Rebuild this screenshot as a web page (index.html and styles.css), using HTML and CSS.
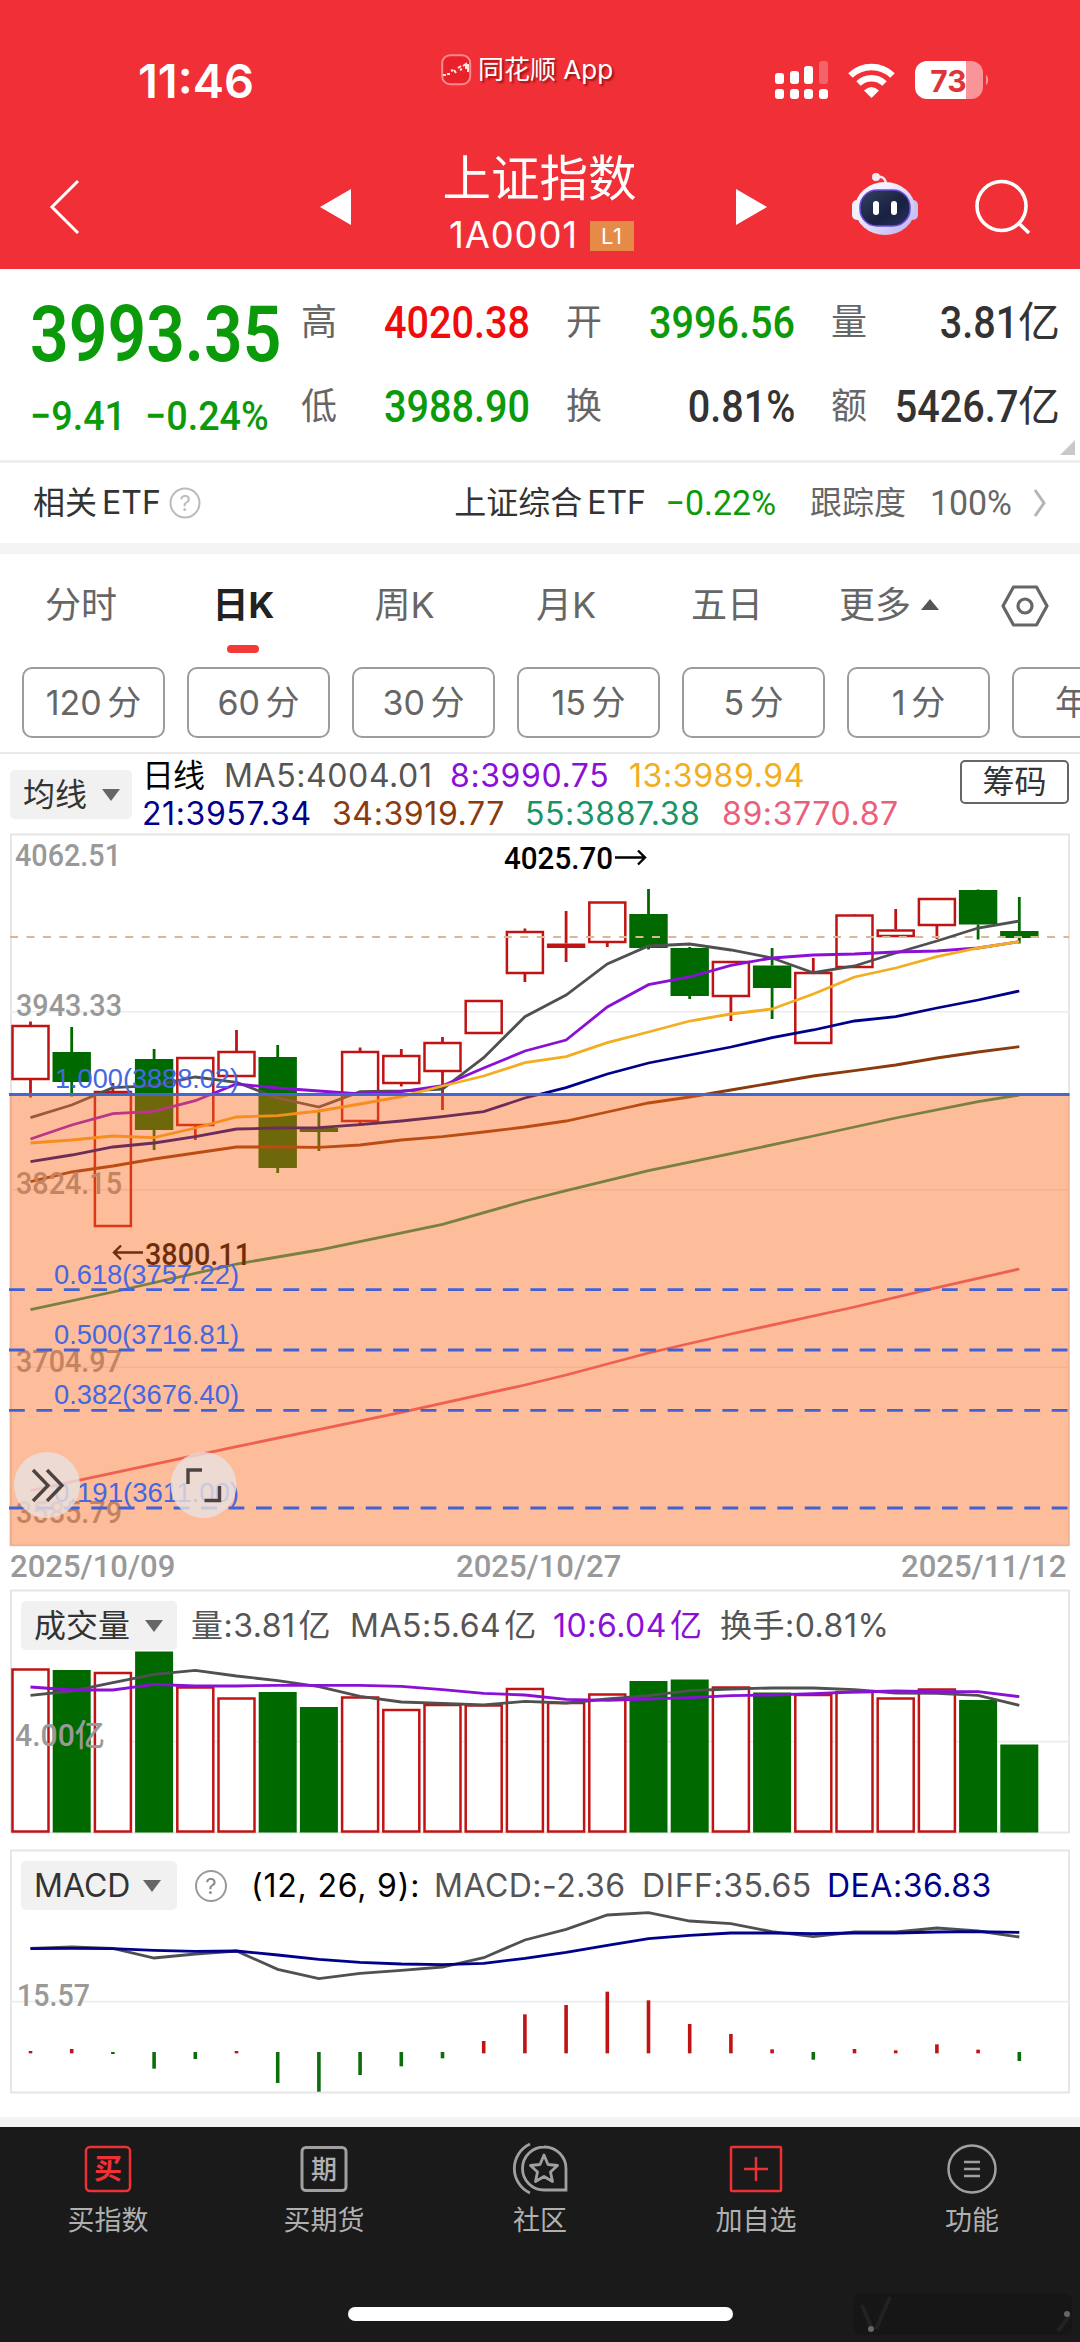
FILE: index.html
```html
<!DOCTYPE html>
<html lang="zh-CN">
<head>
  <meta charset="UTF-8" />
  <meta name="viewport" content="width=device-width, initial-scale=1" />
  <title>上证指数 1A0001</title>
  <link rel="stylesheet" href="styles.css">
</head>
<body>

  <header class="header">
    <div class="status-bar">
      <div class="clock">11:46</div>
      <div class="app-name">
        <svg width="31" height="32" viewBox="0 0 31 32">
          <rect x="1.2" y="1.2" width="28" height="29" rx="8" fill="#e8212a" stroke="#fa8a8a" stroke-width="2" />
          <path d="M2 21h3M6 20h3M10 17l2-1M13 16l2 3M17 14l3-2M19 16l2-1M22 12l3-2v5M27 10v8" stroke="#ffe9dc" stroke-width="2" fill="none" />
        </svg>
        <span>同花顺 App</span>
      </div>
      <div class="status-icons">
        <svg width="54" height="38" viewBox="0 0 54 38" fill="#fff">
          <rect x="0" y="12" width="9" height="11" rx="3" /><rect x="15" y="10" width="9" height="13" rx="3" />
          <rect x="29" y="5" width="9" height="18" rx="3" /><rect x="44" y="0" width="9" height="23" rx="3" opacity=".25" />
          <rect x="0" y="28" width="9" height="10" rx="3" /><rect x="15" y="28" width="9" height="10" rx="3" />
          <rect x="29" y="28" width="9" height="10" rx="3" /><rect x="44" y="28" width="9" height="10" rx="3" />
        </svg>
        <svg class="wifi" width="47" height="35" viewBox="0 0 47 35" fill="none" stroke="#fff" stroke-width="6.5">
          <path d="M2.5 12.5A30 30 0 0 1 44.5 12.5" />
          <path d="M10.5 20.5A19 19 0 0 1 36.5 20.5" />
          <path d="M23.500 35L16 27.5Q23.5 20.5 31 27.5Z" fill="#fff" stroke="none" />
        </svg>
        <svg class="battery" width="76" height="38" viewBox="0 0 76 38">
          <path d="M12 0H51V38H12A12 12 0 0 1 0 26V12A12 12 0 0 1 12 0Z" fill="#fff" />
          <path d="M51 0H56A12 12 0 0 1 68 12V26A12 12 0 0 1 56 38H51Z" fill="#f99599" />
          <path d="M71 13.5Q75.5 19 71 24.5Z" fill="#f99599" />
          <text x="33.5" y="31" class="battery-text" text-anchor="middle">73</text>
        </svg>
      </div>
    </div>

    <div class="title-bar">
      <svg class="back" width="32" height="56" viewBox="0 0 32 56"><path d="M29 2L3 28L29 54" fill="none" stroke="#fff" stroke-width="3" /></svg>
      <svg class="prev" width="32" height="36" viewBox="0 0 32 36"><path d="M0 18L31 0V36Z" fill="#fff" /></svg>
      <div class="title">
        <div class="name">上证指数</div>
        <div class="code">1A0001<span class="level">L1</span></div>
      </div>
      <svg class="next" width="32" height="36" viewBox="0 0 32 36"><path d="M31 18L0 0V36Z" fill="#fff" /></svg>
      <svg class="robot" width="66" height="62" viewBox="0 0 66 62">
        <defs>
          <linearGradient id="shell" x1="0" y1="0" x2="1" y2="1"><stop offset=".3" stop-color="#f4f2fb" /><stop offset="1" stop-color="#b9aef0" /></linearGradient>
          <linearGradient id="visor" x1="0" y1="0" x2="1" y2="1"><stop offset="0" stop-color="#34415f" /><stop offset=".6" stop-color="#18213f" /><stop offset="1" stop-color="#2c2f66" /></linearGradient>
        </defs>
        <path d="M24 4Q33 2 34 11" fill="none" stroke="#f6e4ee" stroke-width="2.5" />
        <circle cx="24" cy="4" r="4" fill="#f6eaf2" />
        <rect x="0" y="27" width="10" height="20" rx="5" fill="#f0eefa" /><rect x="56" y="27" width="10" height="20" rx="5" fill="#c9c0f4" />
        <ellipse cx="33" cy="35.5" rx="30" ry="26.5" fill="url(#shell)" />
        <rect x="8" y="17" width="50" height="36" rx="17" fill="url(#visor)" stroke="#6a4be0" stroke-width="1.5" />
        <rect x="21" y="28" width="6" height="14" rx="3" fill="#fff" /><rect x="39" y="28" width="6" height="14" rx="3" fill="#fff" />
      </svg>
      <svg class="search" width="56" height="56" viewBox="0 0 56 56" fill="none" stroke="#fff" stroke-width="3.6"><circle cx="26.5" cy="27" r="24.5" /><path d="M43.5 44L54 54" /></svg>
    </div>
  </header>

  <section class="quote">
    <div class="price">
      <div class="last"><span class="din">3993.35</span></div>
      <div class="change"><span class="din">−9.41</span><span class="din">−0.24%</span></div>
    </div>
    <div class="stats">
      <div class="stat"><label>高</label><span class="din up">4020.38</span></div>
      <div class="stat"><label>开</label><span class="din down">3996.56</span></div>
      <div class="stat"><label>量</label><span class="value"><span class="din">3.81</span>亿</span></div>
      <div class="stat"><label>低</label><span class="din down">3988.90</span></div>
      <div class="stat"><label>换</label><span class="din">0.81%</span></div>
      <div class="stat"><label>额</label><span class="value"><span class="din">5426.7</span>亿</span></div>
    </div>
    <i class="corner"></i>
  </section>

  <section class="etf">
    <span class="etf-label">相关 ETF</span>
    <svg class="help" width="32" height="32" viewBox="0 0 32 32"><circle cx="16" cy="16" r="14.5" fill="none" stroke="#bbb" stroke-width="2" /><text x="16" y="23.5" text-anchor="middle" fill="#bbb">?</text></svg>
    <span class="etf-name">上证综合 ETF</span>
    <span class="etf-rate din">−0.22%</span>
    <span class="track">跟踪度</span>
    <span class="track-rate din">100%</span>
    <svg width="14" height="28" viewBox="0 0 14 28"><path d="M2 1L11 14L2 27" fill="none" stroke="#b5b5b5" stroke-width="3" /></svg>
  </section>

  <div class="band"></div>

  <nav class="tabs">
    <span>分时</span>
    <span class="active">日K</span>
    <span>周K</span>
    <span>月K</span>
    <span>五日</span>
    <span class="more">更多<i></i></span>
    <svg width="48" height="42" viewBox="0 0 48 42" fill="none" stroke="#666" stroke-width="3.2"><path d="M12.5 2H35.5L46 21L35.5 40H12.5L2 21Z" stroke-linejoin="round" /><circle cx="24" cy="21" r="7" /></svg>
  </nav>

  <div class="chips">
    <span>120 分</span><span>60 分</span><span>30 分</span><span>15 分</span><span>5 分</span><span>1 分</span><span>年K</span>
  </div>

  <section class="ma-bar">
    <div class="picker">均线<i></i></div>
    <div class="ma-list">
      <div class="ma-row first">
        <span class="black">日线</span><span class="grey">MA5:4004.01</span><span class="purple">8:3990.75</span><span class="yellow">13:3989.94</span>
      </div>
      <div class="ma-row second">
        <span class="navy">21:3957.34</span><span class="brown">34:3919.77</span><span class="green">55:3887.38</span><span class="pink">89:3770.87</span>
      </div>
    </div>
    <div class="chip-btn">筹码</div>
  </section>

  <svg class="k-chart" id="kChart" width="1080" height="714" viewBox="0 833 1080 714"></svg>
  <div class="dates">
    <span class="din">2025/10/09</span><span class="din">2025/10/27</span><span class="din">2025/11/12</span>
  </div>

  <section class="panel">
    <div class="legend vol-legend">
      <div class="picker">成交量<i></i></div>
      <span class="grey">量:3.81<b>亿</b></span><span class="grey">MA5:5.64<b>亿</b></span><span class="purple">10:6.04<b>亿</b></span><span class="grey">换手:0.81%</span>
    </div>
    <svg class="sub-chart" id="volChart" width="1080" height="246" viewBox="0 1589 1080 246"></svg>
  </section>

  <section class="panel">
    <div class="legend macd-legend">
      <div class="picker">MACD<i></i></div>
      <svg class="help" width="34" height="34" viewBox="0 0 34 34"><circle cx="17" cy="17" r="15" fill="none" stroke="#999" stroke-width="2" /><text x="17" y="25" text-anchor="middle" fill="#888">?</text></svg>
      <span class="black">(12, 26, 9):</span><span class="grey">MACD:-2.36</span><span class="grey">DIFF:35.65</span><span class="navy">DEA:36.83</span>
    </div>
    <svg class="sub-chart" id="macdChart" width="1080" height="246" viewBox="0 1849 1080 246"></svg>
  </section>

  <div class="band bottom-band"></div>

  <footer class="footer">
    <div class="menu">
      <div class="menu-item">
        <svg width="56" height="56" viewBox="0 0 56 56"><rect x="6" y="6" width="44" height="44" rx="4" fill="none" stroke="#ef3137" stroke-width="2.5" /><text x="28" y="38" text-anchor="middle" class="icon-red">买</text></svg>
        <span>买指数</span>
      </div>
      <div class="menu-item">
        <svg width="56" height="56" viewBox="0 0 56 56"><rect x="6" y="6.5" width="44" height="43" rx="4" fill="none" stroke="#a0a0a0" stroke-width="3" /><text x="28" y="37.5" text-anchor="middle" class="icon-grey">期</text></svg>
        <span>买期货</span>
      </div>
      <div class="menu-item">
        <svg width="56" height="56" viewBox="0 0 56 56" fill="none" stroke="#a0a0a0" stroke-width="2.8">
          <path d="M32 6A21.5 21.5 0 0 0 32 49H54V28A21.5 21.5 0 0 0 32 6Z" />
          <path d="M18 3A27 27 0 0 0 18 52" />
          <path d="M32 14L36 23.5L45.5 24.5L38.5 31L40.5 40.5L32 35.5L23.5 40.5L25.5 31L18.5 24.5L28 23.5Z" stroke-linejoin="round" />
        </svg>
        <span>社区</span>
      </div>
      <div class="menu-item">
        <svg width="56" height="56" viewBox="0 0 56 56" fill="none" stroke="#ef3137" stroke-width="2.5"><rect x="3" y="6" width="50" height="44" rx="1" /><path d="M28 16V40M16 28H40" /></svg>
        <span>加自选</span>
      </div>
      <div class="menu-item">
        <svg width="56" height="56" viewBox="0 0 56 56" fill="none" stroke="#a0a0a0" stroke-width="2.5"><circle cx="28" cy="28" r="23.5" /><path d="M20 21H36M20 28H36M20 35H36" /></svg>
        <span>功能</span>
      </div>
    </div>
    <div class="home-bar"></div>
    <svg class="smudge" width="218" height="42" viewBox="0 0 218 42"><rect width="218" height="42" rx="8" fill="#161616" /><path d="M8 12L18 36M36 4L22 36M204 38L216 22" stroke="#222" stroke-width="4" /><circle cx="17" cy="36" r="3" fill="#666" /><circle cx="213" cy="21" r="3" fill="#666" /></svg>
  </footer>

  <script src="script.js"></script>
</body>
</html>
```

FILE: styles.css
```css
/* Reset & base */
* {
  box-sizing: border-box;
}
body {
  margin: 0;
  width: 1080px;
  height: 2342px;
  overflow: hidden;
  background: #fff;
  color: #333;
  font-family: Inter, "Noto Sans CJK SC", sans-serif;
  font-size: 32px;
  line-height: 1;
}
svg {
  display: block;
  flex: none;
}
span, label {
  white-space: nowrap;
}
/* narrow figures */
.din {
  display: inline-block;
  font-family: Roboto, "Noto Sans CJK SC", sans-serif;
  font-weight: 500;
  transform: scaleX(0.88);
  transform-origin: right center;
}
.up { color: #f00c0c; }
.down { color: #0a9a0a; }
.black { color: #000; }
.grey { color: #555; }
.purple { color: #8a10d8; }
.yellow { color: #f3ad20; }
.navy { color: #00008b; }
.brown { color: #8b3a0e; }
.green { color: #1b9368; }
.pink { color: #ea607b; }

/* Header */
.header {
  height: 269px;
  background: #f12f36;
  color: #fff;
}
.status-bar {
  display: flex;
  align-items: center;
  height: 140px;
  padding: 20px 89px 0 138px;
}
.clock {
  width: 303px;
  font-size: 47px;
  font-weight: 600;
}
.app-name {
  display: flex;
  align-items: center;
  gap: 6px;
  width: 334px;
  margin-top: -21px;
  font-size: 26px;
  text-shadow: 2px 2px 2px rgba(90, 0, 0, 0.6);
}
.status-icons {
  display: flex;
  align-items: center;
}
.wifi {
  margin: 0 20px 0 19px;
}
.battery-text {
  font-size: 30px;
  font-weight: 700;
  fill: #e0343a;
}
.title-bar {
  display: flex;
  align-items: center;
  height: 129px;
  padding: 4px 0 0 49px;
}
.prev { margin-left: 239px; }
.title {
  width: 384px;
  margin-top: -5px;
  padding-right: 9px;
  text-align: center;
}
.name {
  font-size: 48.5px;
  line-height: 58px;
}
.code {
  display: flex;
  justify-content: center;
  align-items: center;
  gap: 12px;
  height: 46px;
  margin-top: 5px;
  padding-left: 4px;
  font-size: 36.5px;
  letter-spacing: 0.8px;
}
.level {
  width: 44px;
  height: 30px;
  background: #e58b47;
  font-size: 22px;
  line-height: 30px;
}
.robot { margin: -6px 0 0 84px; }
.search { margin-left: 57px; }

/* Quote */
.quote {
  display: flex;
  position: relative;
  height: 194px;
  padding: 11px 20px 0 30px;
  border-bottom: 3px solid #eee;
}
.price {
  width: 271px;
  color: #0a9a0a;
}
.price .din { transform-origin: left center; }
.last {
  height: 106px;
  font-size: 77px;
  line-height: 106px;
}
.last .din {
  font-weight: 600;
}
.change {
  display: flex;
  font-size: 41px;
  line-height: 60px;
}
.change .din { transform: scaleX(0.92); }
.change span:first-child { width: 115px; }
.stats {
  display: grid;
  grid-template-columns: repeat(3, 229px);
  grid-auto-rows: 84px;
  column-gap: 36px;
}
.stat {
  display: flex;
  justify-content: space-between;
  align-items: center;
  font-size: 45px;
}
.stat label {
  font-size: 36px;
  color: #666;
}
.stat .value {
  display: flex;
  align-items: center;
}
.value { font-size: 42px; }
.value .din { font-size: 45px; }
.corner {
  position: absolute;
  right: 5px;
  bottom: 5px;
  border-bottom: 15px solid #c8c8c8;
  border-left: 15px solid transparent;
}

/* ETF */
.etf {
  display: flex;
  align-items: center;
  height: 80px;
  padding: 0 33px;
}
.etf .help { margin-left: 8px; }
.help text { font-size: 22px; }
.etf-label, .etf-name { word-spacing: -4px; }
.etf-name { margin-left: auto; }
.etf .din { font-weight: 400; font-size: 35px; transform: scaleX(0.97); }
.etf-rate { width: 130px; text-align: right; color: #0a9a0a; }
.track { margin-left: 34px; color: #666; }
.track-rate { width: 106px; margin-right: 21px; text-align: right; color: #666; }

.band {
  height: 11px;
  background: #f4f4f4;
}

/* Period tabs */
.tabs {
  display: grid;
  grid-template-columns: 162px 163px 159px 164px 158px 158px 1fr;
  align-items: center;
  height: 105px;
  padding-bottom: 4px;
  font-size: 36px;
  color: #666;
  text-align: center;
}
.tabs svg { margin: 3px 0 0 37px; }
.tabs .active {
  color: #222;
  font-weight: 700;
  position: relative;
}
.active::after {
  content: "";
  position: absolute;
  left: 65px;
  top: 58px;
  width: 32px;
  height: 8px;
  border-radius: 4px;
  background: #f33a36;
}
.more {
  display: flex;
  align-items: center;
  gap: 10px;
  padding-left: 33px;
}
.more i {
  border: 9px solid transparent;
  border-top: 0;
  border-bottom: 11px solid #555;
}
.chips {
  display: flex;
  gap: 22px;
  height: 95px;
  padding: 8px 0 0 22px;
  overflow: hidden;
  border-bottom: 2px solid #eaeaea;
}
.chips span {
  flex: none;
  width: 143px;
  height: 71px;
  border: 2px solid #9c9c9c;
  border-radius: 10px;
  font-size: 34px;
  line-height: 68px;
  word-spacing: -4px;
  text-align: center;
  color: #666;
}

/* Moving averages */
.picker {
  display: flex;
  align-items: center;
  gap: 15px;
  height: 49px;
  padding-left: 13px;
  border-radius: 5px;
  background: #f1f1f1;
  letter-spacing: 0;
}
.picker i {
  border: 9px solid transparent;
  border-bottom: 0;
  border-top: 12px solid #666;
}
.ma-bar {
  display: flex;
  height: 79px;
  padding-left: 10px;
}
.ma-bar .picker {
  width: 122px;
  margin-top: 16px;
}
.ma-list {
  width: 828px;
  padding: 3px 0 0 10px;
  letter-spacing: 0.6px;
}
.ma-row {
  display: grid;
  height: 38px;
  align-items: center;
}
.first { grid-template-columns: 82px 226px 179px 200px; }
.first .black { letter-spacing: -1px; }
.second { grid-template-columns: 190px 193px 197px 200px; }
.chip-btn {
  width: 109px;
  height: 44px;
  margin-top: 6px;
  border: 2px solid #666;
  border-radius: 5px;
  line-height: 40px;
  text-align: center;
}

/* Charts */
.k-chart {
  font-family: Roboto, sans-serif;
}
.axis {
  font-size: 31px;
  font-weight: 500;
  fill: #999;
}
.mark {
  font-size: 32px;
  font-weight: 500;
}
.fib {
  font-family: "Liberation Sans", sans-serif;
  font-size: 27px;
  fill: #4567e0;
}
.sub-chart {
  font-family: Roboto, "Noto Sans CJK SC", sans-serif;
}
.dates {
  display: flex;
  justify-content: space-between;
  height: 42px;
  padding: 0 19px 0 10px;
  line-height: 39px;
  color: #999;
}
.dates .din {
  width: 160px;
  transform: scaleX(0.97);
  transform-origin: left center;
}
.panel {
  position: relative;
  height: 246px;
  margin-bottom: 14px;
}
.legend {
  position: absolute;
  left: 21px;
  top: 12px;
  display: grid;
  align-items: center;
  letter-spacing: 0.5px;
}
.legend b {
  margin-left: 3px;
  font-weight: 400;
}
.legend .picker {
  width: 156px;
}
.vol-legend { grid-template-columns: 170px 159px 203px 167px 200px; }
.macd-legend { grid-template-columns: 173px 57px 183px 208px 185px 200px; }
.macd-legend .black { letter-spacing: 0.800px; }
.macd-legend .picker { gap: 13px; }

/* Footer */
.bottom-band {
  height: 10px;
  margin-top: 22px;
}
.footer {
  position: relative;
  height: 216px;
  padding-top: 14px;
  background: #1a1a1a;
}
.menu {
  display: flex;
}
.menu-item {
  display: flex;
  flex-direction: column;
  align-items: center;
  gap: 10px;
  width: 216px;
  font-size: 27px;
  color: #b0b0b0;
}
.icon-red {
  font-size: 28px;
  font-weight: 700;
  fill: #ef3137;
}
.icon-grey {
  font-size: 26px;
  font-weight: 500;
  fill: #b0b0b0;
}
.home-bar {
  width: 385px;
  height: 14px;
  margin: 73px auto 0;
  border-radius: 7px;
  background: #fff;
}
.smudge {
  position: absolute;
  right: 8px;
  bottom: 8px;
}
```

FILE: script.js
```javascript
const RED = '#c01414';
const GREEN = '#006a00';
const step = 41.2;
const cx = i => 30.5 + step * i;

function polyline(ys, color, width = 2.8) {
  const pts = ys.map((y, i) => Array.isArray(y) ? cx(y[0]) + ',' + y[1] : cx(i) + ',' + y);
  return `<polyline points="${pts.join(' ')}" fill="none" stroke="${color}" stroke-width="${width}"/>`;
}
function line(x1, y1, x2, y2, color, width, extra = '') {
  return `<line x1="${x1}" y1="${y1}" x2="${x2}" y2="${y2}" stroke="${color}" stroke-width="${width}" ${extra}/>`;
}
function label(cls, x, y, w, text) {
  return `<text class="${cls}" x="${x}" y="${y}" textLength="${w}" lengthAdjust="spacingAndGlyphs">${text}</text>`;
}

// K线: [涨跌, 最高, 实体上沿, 实体下沿, 最低]
const candles = [
  [1, 1021.5, 1025, 1080, 1097.5], [0, 1027, 1052, 1082, 1096.5], [1, 1083, 1091, 1227, 1227],
  [0, 1049, 1059, 1130, 1150], [1, 1057, 1057, 1126, 1140], [1, 1030, 1051, 1077, 1077],
  [0, 1045, 1057, 1168, 1173], [0, 1111, 1128, 1132, 1151], [1, 1047.5, 1051, 1122, 1124],
  [1, 1049, 1055, 1084, 1086.5], [1, 1037, 1042, 1072, 1110], [1, 1000, 1000, 1034, 1034],
  [1, 928.5, 931, 974, 982], [1, 911, 943.5, 948, 962], [1, 901.5, 901.5, 943, 947],
  [0, 889, 914, 948, 949.5], [0, 947, 948, 996, 999], [1, 961, 961, 997, 1021],
  [0, 948, 965.5, 988, 1019], [1, 958, 972, 1044, 1044], [1, 914, 914.5, 968, 968],
  [1, 909, 929.5, 937, 937], [1, 898, 898, 926, 939], [0, 889.5, 890, 924.5, 939.5], [0, 897, 931, 938, 943.5]
];

let k = '<rect x="11" y="834.5" width="1058" height="711" fill="#fff" stroke="#e6e6e6" stroke-width="2"/>';
[1011.7, 1189.7, 1367.3].forEach(y => k += line(11, y, 1069, y, '#ececec', 1.5));
candles.forEach(([up, hi, top, bottom, low], i) => {
  const x = cx(i), color = up ? RED : GREEN;
  k += line(x, hi, x, top, color, 2.8) + line(x, bottom, x, low, color, 2.8);
  if (up && bottom - top > 5) {
    k += `<rect x="${x - 18}" y="${top + 1}" width="36" height="${bottom - top - 2}" fill="none" stroke="${color}" stroke-width="2.5"/>`;
  } else {
    k += `<rect x="${x - 19.2}" y="${top}" width="38.4" height="${bottom - top}" fill="${color}"/>`;
  }
});
k += line(10, 937, 1069, 937, '#dcb793', 1.8, 'stroke-dasharray="8 8.46"');
k += polyline([1117.7, 1105, 1087.7, 1085.7, 1077, 1082.3, 1098, 1107, 1091.7, 1091, 1089, 1057.7, 1016.7, 995, 964, 946, 944, 950, 958, 972.7, 966, 953, 941, 928, 921], '#505050');
k += polyline([1139, 1125, 1113.7, 1111.3, 1100.7, 1084, 1088, 1091, 1094, 1091.7, 1085.7, 1068, 1051, 1040, 1007, 984.7, 977, 965.3, 958, 955, 954, 952, 951, 948, 941.7], '#8a10d8');
k += polyline([1143, 1140, 1136, 1137.7, 1128, 1117, 1115.7, 1111, 1104, 1096.7, 1086, 1076, 1062.7, 1056.7, 1042.7, 1032, 1021, 1014, 1009, 994, 977, 968, 956.7, 948, 941.7], '#f3ad20');
k += polyline([1161.7, 1155, 1147, 1143, 1136.7, 1129, 1128, 1127.7, 1124.7, 1121, 1116.7, 1111.7, 1098, 1087.7, 1074, 1063, 1055, 1047, 1037.7, 1030, 1021, 1016.7, 1008, 1000, 991], '#00008b');
k += polyline([1181.7, 1172, 1166, 1159, 1153, 1147, 1147, 1147.3, 1145, 1140, 1136.7, 1132, 1127, 1121, 1112, 1103, 1097, 1090, 1083, 1076, 1070.7, 1065, 1058, 1052, 1046.7], '#8b3a0e');
k += polyline([[0, 1309.7], [2, 1292], [5, 1264], [7, 1250], [10, 1224.3], [12, 1201], [13, 1190.7], [14, 1180.7], [15, 1170.7], [17, 1153.7], [19, 1136], [21, 1118], [23, 1101.7], [24, 1095]], '#15945f');
k += polyline([[0, 1490.7], [5, 1446.7], [9, 1412.3], [12, 1385], [13, 1375], [15, 1353], [17, 1334], [20, 1307], [22, 1287.7], [24, 1269]], '#e65b7b');
k += label('axis', 15, 866, 106, '4062.51') + label('axis', 16, 1016, 106, '3943.33') + label('axis', 16, 1194, 106, '3824.15');
k += label('axis', 16, 1372, 106, '3704.97') + label('axis', 16, 1522.5, 106, '3585.79');
k += label('mark', 504, 869, 109, '4025.70') + label('mark', 145, 1264.5, 106, '3800.11');
k += '<path d="M615 857.5H645M638 850.5L645 857.5L638 864.5M143 1252.5H114M121 1245.5L114 1252.5L121 1259.5" fill="none" stroke="#000" stroke-width="2.4"/>';
// 黄金分割
k += '<rect x="9.5" y="1094" width="1060" height="452" fill="rgba(250,103,25,.44)"/>';
k += line(9, 1094.5, 1069.5, 1094.5, '#4168cf', 3);
[1289.7, 1350, 1410.3, 1508].forEach(y => k += line(9, y, 1069, y, '#4262d4', 2.8, 'stroke-dasharray="15.8 11.64"'));
k += label('fib', 55, 1088, 184, '1.000(3888.02)') + label('fib', 54, 1283.5, 185, '0.618(3757.22)') + label('fib', 54, 1344, 185, '0.500(3716.81)');
k += label('fib', 54, 1404, 185, '0.382(3676.40)') + label('fib', 54, 1502, 185, '0.191(3611.00)');
k += '<circle cx="47" cy="1485" r="33" fill="rgba(232,225,225,.8)"/><circle cx="203.5" cy="1485" r="33" fill="rgba(232,225,225,.8)"/>';
k += '<path d="M33 1470L48 1485.5L33 1501M47 1470L62 1485.5L47 1501M188 1484V1470H202M204.5 1500.5H219.5V1486" fill="none" stroke="#4c4442" stroke-width="3.4"/>';
document.getElementById('kChart').innerHTML = k;

// 成交量
const volumes = [
  [1, 1668.5], [0, 1670], [1, 1672], [0, 1651.5], [1, 1686.5], [1, 1697.5], [0, 1692], [0, 1707], [1, 1696.5],
  [1, 1709], [1, 1704], [1, 1704.5], [1, 1688], [1, 1702], [1, 1693.5], [0, 1681], [0, 1679.5], [1, 1686.5],
  [0, 1692.5], [1, 1694], [1, 1691], [1, 1697.5], [1, 1688.5], [0, 1700], [0, 1744.5]
];
let v = '<rect x="11" y="1590.5" width="1058" height="242" fill="#fff" stroke="#e6e6e6" stroke-width="2"/>' + line(11, 1741.7, 1069, 1741.7, '#ececec', 1.8);
volumes.forEach(([up, top], i) => {
  const x = cx(i);
  v += up
    ? `<rect x="${x - 18}" y="${top + 1}" width="36" height="${1830.5 - top}" fill="#fff" stroke="${RED}" stroke-width="2.5"/>`
    : `<rect x="${x - 19}" y="${top}" width="38" height="${1832.5 - top}" fill="${GREEN}"/>`;
});
const vy = n => 1580 + n / 3;
v += polyline([346, 333, 308, 283, 271, 288, 302, 320, 349, 366, 370, 375, 364, 369, 357, 347, 332, 327, 324, 324, 329, 339, 340, 346, 376].map(vy), '#505050');
v += polyline([321, 330, 330, 313, 318, 318, 316, 316, 316, 319, 329, 340, 345, 358, 361, 357, 353, 347, 345, 341, 336, 333, 335, 335, 350].map(vy), '#8a10d8');
v += label('axis', 15, 1746, 90, '4.00亿');
document.getElementById('volChart').innerHTML = v;

// MACD
const my = n => 1840 + n / 3;
const bars = [633, 627, 642, 686, 657, 633, 729, 755, 705, 679, 655, 603, 523, 495, 455, 481, 552, 582, 628, 659, 627, 631, 613, 629, 663];
let m = '<rect x="11" y="1850.5" width="1058" height="242" fill="#fff" stroke="#e6e6e6" stroke-width="2"/>' + line(11, 2001.7, 1069, 2001.7, '#ececec', 1.8);
bars.forEach((b, i) => m += b < 638
  ? line(cx(i), my(b), cx(i), my(640), RED, 3.6)
  : line(cx(i), my(636), cx(i), my(b), '#0a6e0a', 3.6));
m += polyline([325, 321, 325, 354, 342, 333, 388, 416, 400, 391, 381, 353, 300, 268, 225, 218, 243, 251, 275, 290, 276, 276, 264, 273, 291].map(my), '#505050');
m += polyline([326, 325, 326, 331, 334, 333, 345, 358, 367, 372, 374, 370, 355, 337, 316, 296, 286, 279, 279, 281, 279, 279, 276, 275, 277].map(my), '#00008b', 2.8);
m += label('axis', 17, 2006, 73, '15.57');
document.getElementById('macdChart').innerHTML = m;
```
